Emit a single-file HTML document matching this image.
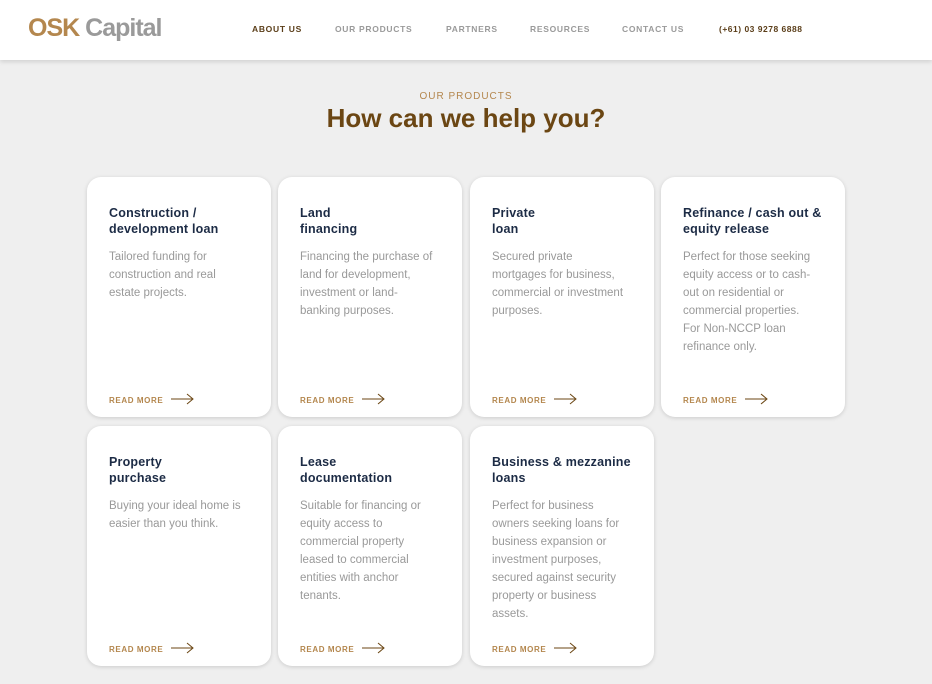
<!DOCTYPE html>
<html><head><meta charset="utf-8"><style>
*{margin:0;padding:0;box-sizing:border-box}
body{width:932px;height:684px;background:#efefef;font-family:"Liberation Sans",sans-serif;overflow:hidden;position:relative}
.hdr{position:absolute;left:0;top:0;width:932px;height:60px;background:#fff;box-shadow:0 2px 4px rgba(0,0,0,.12)}
.logo{position:absolute;left:28px;top:14px;font-size:25px;font-weight:bold;letter-spacing:-1px}
.logo .a{color:#b4874e}.logo .b{color:#9a9a9a}
.nav{position:absolute;top:24px;font-size:8.5px;letter-spacing:0.7px;color:#9a9a9a;font-weight:bold}
.sub{position:absolute;top:91px;width:932px;text-align:center;font-size:10px;letter-spacing:1px;color:#b4874e}
h1{position:absolute;top:103px;width:932px;text-align:center;font-size:26px;color:#6b4613;font-weight:bold}
.card{position:absolute;width:184px;height:240px;background:#fff;border-radius:14px;box-shadow:0 1px 4px rgba(0,0,0,.15)}
.card h3{position:absolute;left:22px;top:28px;font-size:12.5px;line-height:16px;color:#1c2b45;font-weight:bold;letter-spacing:0.2px}
.card p{position:absolute;left:22px;top:71px;width:138px;font-size:11.5px;line-height:18px;color:#999}
.rm{position:absolute;left:22px;top:219px;font-size:8px;font-weight:bold;letter-spacing:0.6px;color:#b4874e}
.rm svg{position:absolute;left:62px;top:-3px}
</style></head><body>
<div class="hdr">
<div class="logo"><span class="a">OSK</span> <span class="b">Capital</span></div>
<div class="nav" style="left:252px;color:#5a3d18">ABOUT US</div>
<div class="nav" style="left:335px">OUR PRODUCTS</div>
<div class="nav" style="left:446px">PARTNERS</div>
<div class="nav" style="left:530px">RESOURCES</div>
<div class="nav" style="left:622px">CONTACT US</div>
<div class="nav" style="left:719px;color:#5a3d18;letter-spacing:0.5px">(+61) 03 9278 6888</div>
</div>
<div class="sub">OUR PRODUCTS</div>
<h1>How can we help you?</h1>

<div class="card" style="left:87px;top:177px"><h3>Construction /<br>development loan</h3><p>Tailored funding for construction and real estate projects.</p><div class="rm">READ MORE<svg width="24" height="12"><path d="M0 6H22M16 1L22 6L16 11" fill="none" stroke="#6b4613" stroke-width="1"/></svg></div></div>
<div class="card" style="left:278px;top:177px"><h3>Land<br>financing</h3><p>Financing the purchase of land for development, investment or land-banking purposes.</p><div class="rm">READ MORE<svg width="24" height="12"><path d="M0 6H22M16 1L22 6L16 11" fill="none" stroke="#6b4613" stroke-width="1"/></svg></div></div>
<div class="card" style="left:470px;top:177px"><h3>Private<br>loan</h3><p>Secured private mortgages for business, commercial or investment purposes.</p><div class="rm">READ MORE<svg width="24" height="12"><path d="M0 6H22M16 1L22 6L16 11" fill="none" stroke="#6b4613" stroke-width="1"/></svg></div></div>
<div class="card" style="left:661px;top:177px"><h3>Refinance / cash out &amp;<br>equity release</h3><p>Perfect for those seeking equity access or to cash-out on residential or commercial properties.<br>For Non-NCCP loan refinance only.</p><div class="rm">READ MORE<svg width="24" height="12"><path d="M0 6H22M16 1L22 6L16 11" fill="none" stroke="#6b4613" stroke-width="1"/></svg></div></div>
<div class="card" style="left:87px;top:426px"><h3>Property<br>purchase</h3><p>Buying your ideal home is easier than you think.</p><div class="rm">READ MORE<svg width="24" height="12"><path d="M0 6H22M16 1L22 6L16 11" fill="none" stroke="#6b4613" stroke-width="1"/></svg></div></div>
<div class="card" style="left:278px;top:426px"><h3>Lease<br>documentation</h3><p>Suitable for financing or equity access to commercial property leased to commercial entities with anchor tenants.</p><div class="rm">READ MORE<svg width="24" height="12"><path d="M0 6H22M16 1L22 6L16 11" fill="none" stroke="#6b4613" stroke-width="1"/></svg></div></div>
<div class="card" style="left:470px;top:426px"><h3>Business &amp; mezzanine<br>loans</h3><p>Perfect for business owners seeking loans for business expansion or investment purposes, secured against security property or business assets.</p><div class="rm">READ MORE<svg width="24" height="12"><path d="M0 6H22M16 1L22 6L16 11" fill="none" stroke="#6b4613" stroke-width="1"/></svg></div></div>
</body></html>
